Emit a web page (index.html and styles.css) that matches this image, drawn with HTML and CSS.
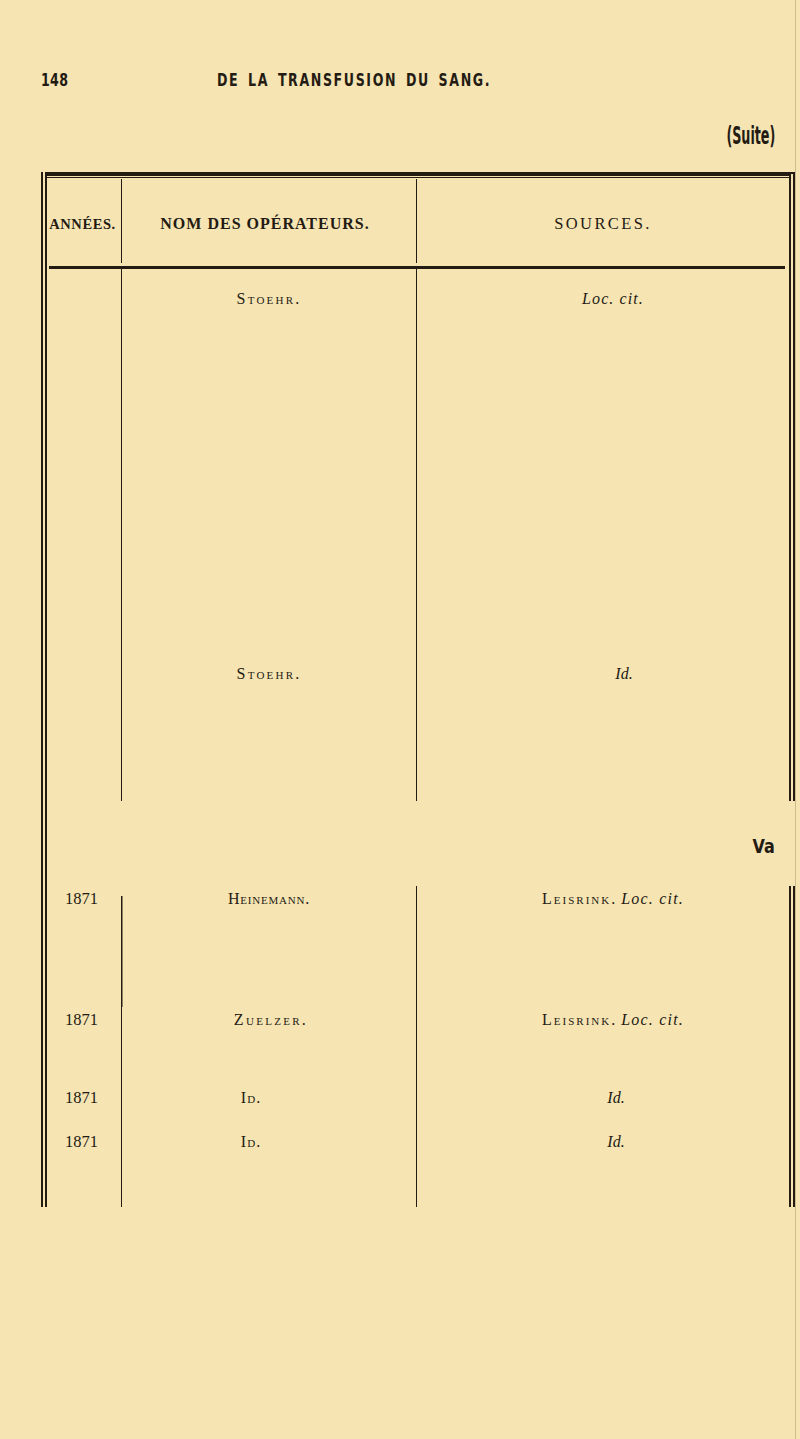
FILE: index.html
```html
<!DOCTYPE html>
<html lang="fr">
<head>
<meta charset="utf-8">
<title>De la transfusion du sang — 148</title>
<link rel="stylesheet" href="styles.css">
</head>
<body>
<div class="sheet">
  <header class="running">
    <span class="folio">148</span>
    <span class="title">DE LA TRANSFUSION DU SANG.</span>
  </header>
  <div class="suite"><span>(Suite)</span></div>

  <div class="table">
    <section class="block block-top">
      <div class="thead">
        <div class="hcell c1"><span class="h-annees">ANNÉES.</span></div>
        <div class="hcell c2"><span class="h-noms">NOM DES OPÉRATEURS.</span></div>
        <div class="hcell c3"><span class="h-sources">SOURCES.</span></div>
      </div>
      <div class="rule"></div>
      <div class="tbody body-a">
        <div class="cell c1"></div>
        <div class="cell c2"><span class="name n-stoehr">Stoehr.</span></div>
        <div class="cell c3"><span class="src s-loc">Loc. cit.</span></div>
        <div class="cell c1"></div>
        <div class="cell c2"><span class="name n-stoehr">Stoehr.</span></div>
        <div class="cell c3"><span class="src s-id1">Id.</span></div>
      </div>
    </section>

    <div class="catch"><span>Va</span></div>

    <section class="block">
      <div class="tbody body-b">
        <div class="cell c1"><span class="year">1871</span></div>
        <div class="cell c2 c2-late"><span class="name n-heine">Heinemann.</span></div>
        <div class="cell c3"><span class="src s-leis"><span class="sc">Leisrink.</span> <i>Loc. cit.</i></span></div>

        <div class="cell c1"><span class="year">1871</span></div>
        <div class="cell c2"><span class="name n-zuel">Zuelzer.</span></div>
        <div class="cell c3"><span class="src s-leis"><span class="sc">Leisrink.</span> <i>Loc. cit.</i></span></div>

        <div class="cell c1"><span class="year">1871</span></div>
        <div class="cell c2"><span class="name n-id">Id.</span></div>
        <div class="cell c3"><span class="src s-id2">Id.</span></div>

        <div class="cell c1"><span class="year">1871</span></div>
        <div class="cell c2"><span class="name n-id">Id.</span></div>
        <div class="cell c3"><span class="src s-id2">Id.</span></div>
      </div>
    </section>
  </div>
</div>
</body>
</html>
```

FILE: styles.css
```css
html, body {
  margin: 0;
  padding: 0;
}

body {
  background: #f6e4b3;
  color: #241b13;
  font-family: "Liberation Serif", "DejaVu Serif", serif;
}

.sheet {
  width: 795px;
  height: 1439px;
  border-right: 1px solid #cdbb8e;
}

/* running head */
.running {
  display: flex;
  padding: 70px 0 0 41px;
  height: 20px;
  line-height: 20px;
  font-family: "DejaVu Sans", "Liberation Sans", sans-serif;
  font-weight: bold;
  font-size: 18px;
  white-space: nowrap;
}

.folio,
.title {
  display: inline-block;
  transform: scaleX(0.7);
  transform-origin: left center;
}

.folio {
  width: 176px;
  letter-spacing: 0.5px;
}

.title {
  letter-spacing: 2.3px;
  word-spacing: 4px;
}

.suite {
  text-align: right;
  padding-right: 20px;
  margin-top: 32px;
  height: 28px;
  line-height: 28px;
  font-family: "DejaVu Sans", "Liberation Sans", sans-serif;
  font-size: 24px;
  font-weight: 600;
}

.suite span {
  display: inline-block;
  transform: scaleX(0.53);
  transform-origin: right center;
}

/* table frame */
.table {
  margin: 22px 0 0 41px;
  width: 754px;
  box-sizing: border-box;
  border-left: 6px double #241b13;
}

.block {
  border-right: 6px double #241b13;
}

.block-top {
  border-top: 4px solid #241b13;
}

.thead,
.tbody {
  display: grid;
  grid-template-columns: 74px 295px 1fr;
}

.thead {
  height: 90px;
  box-sizing: border-box;
  padding: 3px 0 3px;
  box-shadow: inset 0 1px 0 #f6e4b3, inset 0 2px 0 #241b13;
}

.hcell {
  display: flex;
  align-items: center;
  justify-content: center;
  padding-top: 6px;
  font-weight: bold;
}

.c2,
.c3 {
  border-left: 1.5px solid #241b13;
}

.h-annees {
  font-size: 14.5px;
  letter-spacing: 0.6px;
  margin-left: -3px;
}

.h-noms {
  font-size: 16px;
  letter-spacing: 1px;
  margin-right: 8px;
}

.h-sources {
  font-weight: normal;
  font-size: 16.5px;
  letter-spacing: 2.4px;
}

.rule {
  height: 3px;
  margin: 0 4px 0 2px;
  background: #241b13;
}

/* body rows */
.cell {
  box-sizing: border-box;
  line-height: 20px;
  white-space: nowrap;
}

.tbody .c2 {
  text-align: center;
}

.tbody .c3 {
  text-align: center;
  padding-left: 20px;
}

.body-a {
  grid-template-rows: 375px 157px;
}

.body-a .cell {
  padding-top: 20px;
}

.body-b {
  grid-template-rows: 121px 78px 44px 78px;
}

.body-b .cell {
  padding-top: 3px;
}

/* the first divider of the lower part starts a little below its top */
.body-b .c2-late {
  border-left-color: transparent;
  background: linear-gradient(#241b13, #241b13) no-repeat 0 10px / 1.5px 100%;
  background-origin: border-box;
}

.year {
  display: inline-block;
  margin-left: 18px;
  font-size: 16.5px;
}

.name {
  display: inline-block;
  font-variant: small-caps;
  font-size: 16px;
}

.n-stoehr { letter-spacing: 2.2px; }
.n-heine  { letter-spacing: 0.8px; }
.n-zuel   { letter-spacing: 2.3px; margin-left: 4px; }
.n-id     { letter-spacing: 1px; margin-right: 36px; }

.src {
  display: inline-block;
  font-size: 16px;
}

.s-loc {
  font-style: italic;
  letter-spacing: 1.1px;
}

.s-id1 {
  font-style: italic;
  margin-left: 22px;
}

.s-id2 {
  font-style: italic;
  margin-left: 6px;
}

.s-leis .sc {
  font-variant: small-caps;
  letter-spacing: 2px;
}

.s-leis i {
  letter-spacing: 1.2px;
}

/* catchword between the two page parts */
.catch {
  height: 85px;
  box-sizing: border-box;
  padding: 35px 20px 0 0;
  text-align: right;
  line-height: 20px;
  font-family: "DejaVu Sans", "Liberation Sans", sans-serif;
  font-weight: bold;
  font-size: 20px;
}

.catch span {
  display: inline-block;
  transform: scaleX(0.8);
  transform-origin: right center;
}
```
